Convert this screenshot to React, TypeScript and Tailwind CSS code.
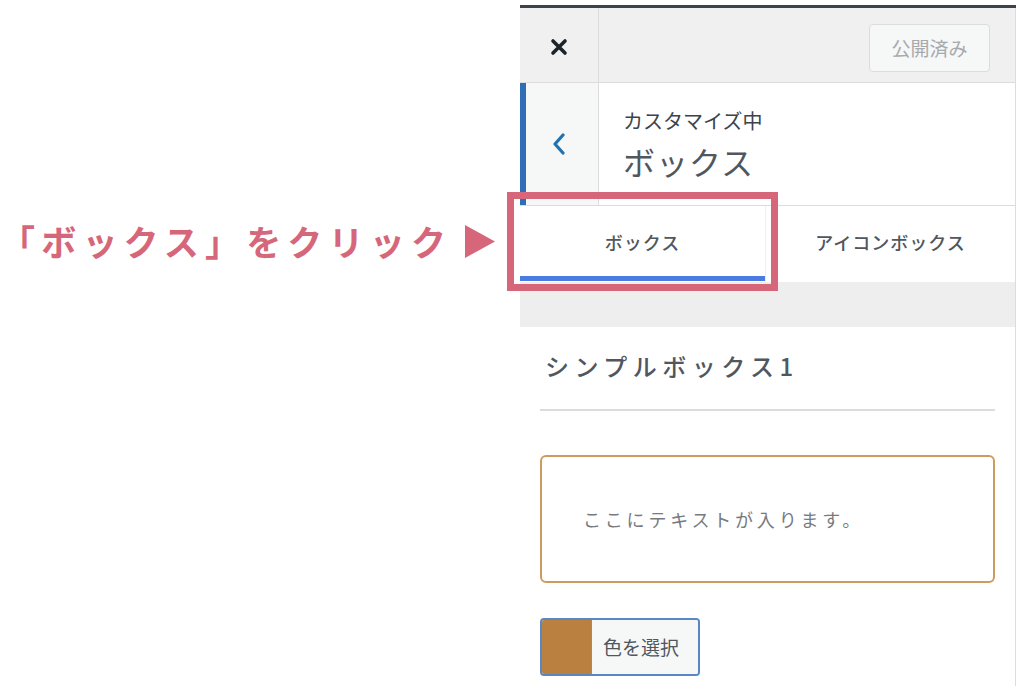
import React from 'react';

const jp = { fontFamily: '"Noto Sans CJK JP", "Noto Sans", sans-serif' };

export default function App() {
  return (
    <div className="relative flex w-[1024px] h-[686px] overflow-hidden bg-white" style={jp}>
      {/* Annotation label */}
      <div className="w-[520px] shrink-0 pt-[218px]">
        <div className="flex items-center text-[#d6677a]">
          <span className="text-[35px] leading-[46px] font-bold tracking-[6.2px]">「ボックス」をクリック</span>
          <svg width="32" height="35" viewBox="0 0 32 35" className="ml-[12px]">
            <polygon points="1,1 31,17.5 1,34" fill="#d6677a" />
          </svg>
        </div>
      </div>

      {/* Customizer panel */}
      <div className="w-[496px] shrink-0 mt-[5px] flex flex-col border-t-[3px] border-[#3c434a]">
        <div className="border-r border-[#dcdcde] flex flex-col h-full">
          {/* Header */}
          <div className="flex h-[75px] shrink-0 bg-[#f0f0f1] border-b border-[#dcdcde]">
            <div className="w-[79px] flex items-center justify-center border-r border-[#dcdcde] pt-[3px]">
              <svg width="18" height="18" viewBox="0 0 18 18">
                <path d="M3 3 L15 15 M15 3 L3 15" stroke="#1d2327" strokeWidth="3.6" strokeLinecap="round" />
              </svg>
            </div>
            <div className="flex-1 flex items-start justify-end pr-[25px] pt-[16px]">
              <div className="w-[121px] h-[48px] rounded-[4px] border border-[#dcdcde] bg-[#f6f7f7] flex items-center justify-center text-[19px] text-[#a7aaad]">
                公開済み
              </div>
            </div>
          </div>

          {/* Section title */}
          <div className="flex h-[123px] shrink-0 border-b border-[#dcdcde]">
            <div className="w-[79px] flex items-center justify-center bg-[#f6f7f7] border-l-[6px] border-[#2f6db5] border-r border-r-[#dcdcde] pr-[6px]">
              <svg width="14" height="22" viewBox="0 0 14 22">
                <path d="M11 2 L3 11 L11 20" fill="none" stroke="#2271b1" strokeWidth="3.2" strokeLinecap="round" strokeLinejoin="round" />
              </svg>
            </div>
            <div className="flex-1 pl-[24px] pt-[24px]">
              <div className="text-[20px] leading-[28px] text-[#3c434a]">カスタマイズ中</div>
              <div className="text-[32px] leading-[44px] text-[#50575e] mt-[4px] tracking-[1px]">ボックス</div>
            </div>
          </div>

          {/* Tabs */}
          <div className="flex h-[76px] shrink-0">
            <div className="w-[246px] flex flex-col border-r border-[#eeeeee]">
              <div className="flex-1 flex items-center justify-center text-[18px] font-medium text-[#50575e] tracking-[1px] pt-[2px]">ボックス</div>
              <div className="h-[5px] bg-[#4a7be0]" />
              <div className="h-[1px]" />
            </div>
            <div className="flex-1 flex items-center justify-center text-[18px] font-medium text-[#50575e] tracking-[1px] pb-[4px]">アイコンボックス</div>
          </div>
          <div className="h-[45px] shrink-0 bg-[#eeeeee]" />

          {/* Content */}
          <div className="px-[20px] pt-[22px]">
            <div className="pl-[5px] text-[24px] leading-[34px] text-[#50575e] tracking-[5.5px] font-medium">シンプルボックス1</div>
            <div className="mt-[26px] h-[2px] bg-[#dcdcde]" />
            <div className="mt-[44px] h-[128px] rounded-[6px] border-2 border-[#cf9a5e] flex items-center pl-[41px]">
              <span className="text-[18px] text-[#777b80] tracking-[3.8px]">ここにテキストが入ります。</span>
            </div>
            <div className="mt-[35px] flex w-[160px] h-[58px] rounded-[4px] border-2 border-[#5a87c4] overflow-hidden">
              <div className="w-[50px] bg-[#b9803f] border-r border-[#8c8f94]" />
              <div className="flex-1 bg-[#f6f7f7] flex items-center pl-[11px] text-[19px] text-[#50575e]">色を選択</div>
            </div>
          </div>
        </div>
      </div>

      {/* Red highlight box */}
      <div className="absolute left-[507px] top-[192px] w-[271px] h-[99px] border-[7px] border-[#d6677a]" />
    </div>
  );
}
